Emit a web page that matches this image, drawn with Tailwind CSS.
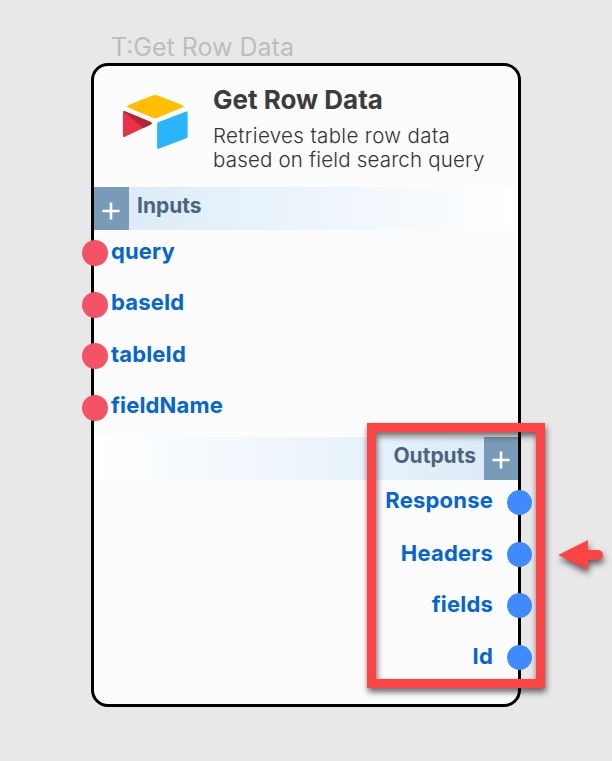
<!DOCTYPE html>
<html lang="en">
<head>
<meta charset="utf-8">
<title>Get Row Data</title>
<script src="https://cdn.jsdelivr.net/npm/@tailwindcss/browser@4"></script>
</head>
<body class="relative h-[761px] w-[612px] overflow-hidden bg-[#e8e8e8] font-['Inter',sans-serif]">
<main class="flex flex-col pl-[91px] pt-[32px]">
  <div class="h-[31px] pl-[20px] text-[25px] leading-[31px] font-normal whitespace-nowrap text-[#bdbdbd]"><span>T:Get Row Data</span></div>
  <section class="flex h-[644px] w-[430px] flex-col rounded-[17px] border-[3px] border-black bg-[#fcfcfc]">
    <header class="flex h-[121px] shrink-0 pl-[28px] pt-[28px]">
      <svg class="h-[56px] w-[66px] shrink-0" viewBox="0 0 66 56">
        <path d="M6 10.9 29.8 1.5Q32.5 .5 35.2 1.5L59.5 10.9Q62.2 12.3 59.5 13.6L35.2 23.8Q32.5 24.8 29.8 23.8L6 13.7Q3.3 12.3 6 10.9Z" transform="translate(.6 0)" fill="#ffbf00"/>
        <path d="M36.2 28.3 64.2 17.4Q65.6 17 65.6 18.4V42.6Q65.6 43.8 64.4 44.3L36.5 54.8Q35.1 55.3 35.1 53.8V29.7Q35.1 28.7 36.2 28.3Z" fill="#28b5fa"/>
        <path d="M1 18.2Q1 16.5 2.8 17.3L28.7 28Q30.8 29.2 28.7 30.4L2.8 42.8Q1 43.6 1 41.8Z" fill="#ed3049"/>
        <path d="M1.6 17.5Q2 17 2.8 17.3L28.7 28Q30.8 29.2 28.7 30.4L21.4 34Z" fill="#b22437"/>
      </svg>
      <div class="pl-[25px] whitespace-nowrap text-[#3c3c3c]">
        <h1 class="-mt-[10px] text-[26px] leading-[32px] font-bold">Get Row Data</h1>
        <p class="mt-[8px] text-[20.5px] leading-[24px] font-light text-[#333]"><span class="tracking-[0.36px]">Retrieves table row data</span><br><span class="tracking-[0.18px]">based on field search query</span></p>
      </div>
    </header>
    <div class="flex h-[43px] shrink-0 bg-linear-to-r from-[#d9eaf7] to-white">
      <div class="flex w-[35px] items-center justify-center bg-[#789bb7]">
        <svg class="mt-[4px] mr-px h-[18px] w-[18px]" viewBox="0 0 18 18"><path d="M9 .5v17M.5 9h17" stroke="#fff" stroke-width="2.6"/></svg>
      </div>
      <h2 class="pl-[8px] text-[21px] leading-[38px] font-bold text-[#4b6580]">Inputs</h2>
    </div>
    <ul class="flex h-[206.5px] shrink-0 flex-col text-[22px] leading-[26px] font-bold tracking-[0.15px] text-[#0365d6]">
      <li class="-ml-[12px] flex h-[51.7px] gap-[3px] pt-[8px]"><i class="mt-[2px] size-[26px] rounded-full bg-[#f45265]"></i><span>query</span></li>
      <li class="-ml-[12px] flex h-[51.7px] gap-[3px] pt-[7px]"><i class="mt-[3px] size-[26px] rounded-full bg-[#f45265]"></i><span>baseId</span></li>
      <li class="-ml-[12px] flex h-[51.7px] gap-[3px] pt-[8px]"><i class="mt-[2px] size-[26px] rounded-full bg-[#f45265]"></i><span>tableId</span></li>
      <li class="-ml-[12px] flex h-[51.7px] gap-[3px] pt-[7px]"><i class="mt-[3px] size-[26px] rounded-full bg-[#f45265]"></i><span>fieldName</span></li>
    </ul>
    <div class="flex h-[43px] shrink-0 justify-end bg-linear-to-l from-[#d9eaf7] to-white">
      <h2 class="pr-[8px] text-[21px] leading-[38px] font-bold text-[#4b6580]">Outputs</h2>
      <div class="flex w-[34px] items-center justify-center bg-[#789bb7]">
        <svg class="mt-[4px] h-[18px] w-[18px]" viewBox="0 0 18 18"><path d="M9 .5v17M.5 9h17" stroke="#fff" stroke-width="2.6"/></svg>
      </div>
    </div>
    <ul class="flex flex-col text-[22px] leading-[26px] font-bold tracking-[0.2px] text-[#0365d6]">
      <li class="-mr-[14px] flex h-[51.7px] justify-end gap-[14px] pt-[7px]"><span>Response</span><i class="mt-[3.5px] size-[25px] rounded-full bg-[#3f8bfd]"></i></li>
      <li class="-mr-[14px] flex h-[51.7px] justify-end gap-[14px] pt-[9px]"><span>Headers</span><i class="mt-[1.5px] size-[25px] rounded-full bg-[#3f8bfd]"></i></li>
      <li class="-mr-[14px] flex h-[51.7px] justify-end gap-[14px] pt-[8px]"><span>fields</span><i class="mt-[2.5px] size-[25px] rounded-full bg-[#3f8bfd]"></i></li>
      <li class="-mr-[14px] flex h-[51.7px] justify-end gap-[14px] pt-[8px]"><span>Id</span><i class="mt-[2.5px] size-[25px] rounded-full bg-[#3f8bfd]"></i></li>
    </ul>
  </section>
</main>
<svg class="absolute left-0 top-0 h-[761px] w-[612px] drop-shadow-[1px_4px_3px_rgba(0,0,0,0.6)]" viewBox="0 0 612 761" fill="none">
  <rect x="371.5" y="427.5" width="169" height="256" stroke="#fe4344" stroke-width="9"/>
  <path d="M558.3 555 588 540v10h10a5 5 0 0 1 0 10h-10v10Z" fill="#fe4344"/>
</svg>
</body>
</html>
